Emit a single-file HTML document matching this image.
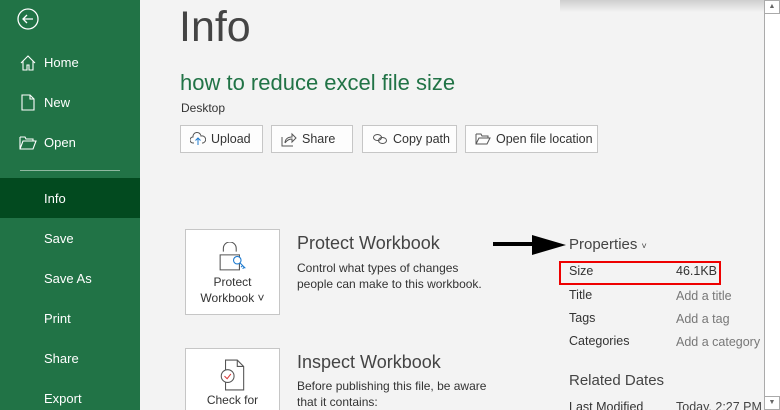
<!DOCTYPE html><html><head><style>
*{margin:0;padding:0;box-sizing:border-box}
html,body{width:780px;height:410px;overflow:hidden}
body{background:#f3f3f3;font-family:"Liberation Sans",sans-serif;position:relative;color:#444}
.a{position:absolute;white-space:nowrap}
#side{position:absolute;left:0;top:0;width:140px;height:410px;background:#217346}
.si{position:absolute;left:44px;color:#fff;font-size:13px}
.btn{position:absolute;top:125px;height:28px;border:1px solid #c6c6c6;background:#fdfdfd;font-size:12.5px;color:#333;line-height:26px;padding-left:30px}
.btn svg{position:absolute;left:9px;top:5px}
.big{position:absolute;left:185px;width:95px;border:1px solid #c6c6c6;background:#fff;font-size:12px;color:#333;text-align:center}
.pl{position:absolute;left:569px;font-size:12.5px;color:#333}
.pv{position:absolute;left:676px;font-size:12.5px;color:#777}
</style></head><body>
<div class="a" style="left:560px;top:0;width:204px;height:12px;background:linear-gradient(#cfcfcf,#f3f3f3)"></div>
<div id="side">
<svg class="a" style="left:17px;top:8px" width="22" height="22" viewBox="0 0 22 22" fill="none" stroke="#fff" stroke-width="1.3"><circle cx="11" cy="11" r="10"/><path d="M16 11H6M10 7l-4 4 4 4"/></svg>
<svg class="a" style="left:20px;top:55px" width="16" height="16" viewBox="0 0 16 16" fill="none" stroke="#fff" stroke-width="1.1"><path d="M1 8L8 1l7 7M3 6v9h4v-5h2v5h4V6"/></svg>
<div class="si" style="top:55px">Home</div>
<svg class="a" style="left:21px;top:94px" width="14" height="17" viewBox="0 0 14 17" fill="none" stroke="#fff" stroke-width="1.1"><path d="M1 1h8l4 4v11H1zM9 1v4h4"/></svg>
<div class="si" style="top:95px">New</div>
<svg class="a" style="left:19px;top:136px" width="18" height="14" viewBox="0 0 18 14" fill="none" stroke="#fff" stroke-width="1.1"><path d="M1 1h5l1 2h7v2M1 1v12h13l3-8H4L1 13"/></svg>
<div class="si" style="top:135px">Open</div>
<div class="a" style="left:20px;top:170px;width:100px;height:1px;background:#8fb8a0"></div>
<div class="a" style="left:0;top:178px;width:140px;height:40px;background:#024a1f"></div>
<div class="si" style="top:191px">Info</div>
<div class="si" style="top:231px">Save</div>
<div class="si" style="top:271px">Save As</div>
<div class="si" style="top:311px">Print</div>
<div class="si" style="top:351px">Share</div>
<div class="si" style="top:391px">Export</div>
</div>
<div class="a" style="left:179px;top:3px;font-size:43px;color:#444;font-weight:300">Info</div>
<div class="a" style="left:180px;top:70px;font-size:22px;color:#217346">how to reduce excel file size</div>
<div class="a" style="left:181px;top:101px;font-size:12px;color:#333">Desktop</div>
<div class="btn" style="left:180px;width:83px">Upload<svg width="16" height="16" viewBox="0 0 16 16" fill="none" stroke="#555" stroke-width="1"><path d="M4 12H3a3 3 0 010-6 4 4 0 018-1 3 3 0 012 7h-1"/><path d="M8 14V7M5.5 9.5L8 7l2.5 2.5" stroke="#1e7bd0"/></svg></div>
<div class="btn" style="left:271px;width:82px">Share<svg width="16" height="16" viewBox="0 0 16 16" fill="none" stroke="#555" stroke-width="1"><path d="M1 6v9h11M4 12c0-4 3-6 7-6V3l4 4-4 4V8c-3 0-5 1-7 4"/></svg></div>
<div class="btn" style="left:362px;width:95px">Copy path<svg width="16" height="16" viewBox="0 0 16 16" fill="none" stroke="#555" stroke-width="1"><ellipse cx="5.5" cy="6.5" rx="4" ry="3"/><ellipse cx="10.5" cy="9.5" rx="4" ry="3"/></svg></div>
<div class="btn" style="left:465px;width:133px">Open file location<svg width="16" height="16" viewBox="0 0 16 16" fill="none" stroke="#555" stroke-width="1"><path d="M1 3h5l1 2h6v2M1 3v10h11l3-6H4L1 13"/></svg></div>
<div class="big" style="top:229px;height:86px">
<svg style="position:absolute;left:32px;top:12px" width="30" height="30" viewBox="0 0 26 28" fill="none" stroke="#555" stroke-width="1"><path d="M4 9V6a6 6 0 0112 0v3M1 12h18v14H1z"/><circle cx="17" cy="17" r="3.5" stroke="#1e7bd0" fill="#fff"/><path d="M19.5 19.5l5 5M22 22l-1.5 1.5M23.5 23.5L22 25" stroke="#1e7bd0"/></svg>
<div style="position:absolute;top:44px;width:100%;line-height:16px">Protect<br>Workbook ˅</div></div>
<div class="big" style="top:348px;height:70px">
<svg style="position:absolute;left:32px;top:10px" width="30" height="32" viewBox="0 0 26 30" fill="none" stroke="#555" stroke-width="1"><path d="M6 1h11l6 6v22H6zM17 1v6h6"/><circle cx="8" cy="16" r="6" fill="#fff"/><path d="M5 16l2.5 2.5L11 14" stroke="#d83b3b"/></svg>
<div style="position:absolute;top:44px;width:100%">Check for</div></div>
<div class="a" style="left:297px;top:233px;font-size:18px;color:#444">Protect Workbook</div>
<div class="a" style="left:297px;top:261px;font-size:12px;color:#333;line-height:15.5px">Control what types of changes<br>people can make to this workbook.</div>
<div class="a" style="left:297px;top:352px;font-size:18px;color:#444">Inspect Workbook</div>
<div class="a" style="left:297px;top:379px;font-size:12px;color:#333;line-height:15.5px">Before publishing this file, be aware<br>that it contains:</div>
<svg class="a" style="left:492px;top:234px" width="75" height="22" viewBox="0 0 75 22"><path d="M1 10h40" stroke="#000" stroke-width="4"/><path d="M40 1l34 10-34 10z" fill="#000"/></svg>
<div class="a" style="left:569px;top:236px;font-size:15px;color:#444">Properties <span style="font-size:9px">˅</span></div>
<div class="a" style="left:559px;top:261px;width:162px;height:24px;border:2px solid #e00"></div>
<div class="pl" style="top:264px">Size</div><div class="pl" style="left:676px;top:264px">46.1KB</div>
<div class="pl" style="top:288px">Title</div><div class="pv" style="top:289px">Add a title</div>
<div class="pl" style="top:311px">Tags</div><div class="pv" style="top:312px">Add a tag</div>
<div class="pl" style="top:334px">Categories</div><div class="pv" style="top:335px">Add a category</div>
<div class="a" style="left:569px;top:372px;font-size:15px;color:#444">Related Dates</div>
<div class="pl" style="top:400px">Last Modified</div><div class="pv" style="top:400px;color:#444">Today, 2:27 PM</div>
<div class="a" style="left:764px;top:0;width:16px;height:410px;background:#fff;border-left:1px solid #aaa"></div>
<div class="a" style="left:764px;top:0;width:16px;height:14px;border:1px solid #aaa;background:#fff;font-size:7px;text-align:center;color:#666;line-height:12px">▲</div>
<div class="a" style="left:764px;top:396px;width:16px;height:14px;border:1px solid #aaa;background:#fff;font-size:7px;text-align:center;color:#666;line-height:12px">▼</div>
</body></html>
